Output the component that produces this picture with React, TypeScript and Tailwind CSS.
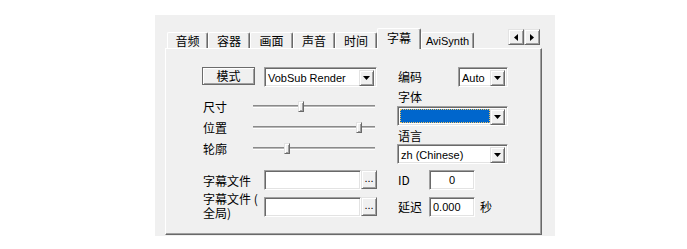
import React from "react";

const cjk = "font-['Noto_Sans_CJK_SC',sans-serif]";
const latin = "font-['Liberation_Sans','Noto_Sans_CJK_SC',sans-serif]";

const sunken =
  "border border-t-[#a0a0a0] border-l-[#a0a0a0] border-r-white border-b-white shadow-[inset_1px_1px_0_#696969,inset_-1px_-1px_0_#e3e3e3]";
const raised =
  "border border-t-[#e3e3e3] border-l-[#e3e3e3] border-r-[#696969] border-b-[#696969] shadow-[inset_1px_1px_0_#fff,inset_-1px_-1px_0_#a0a0a0] bg-[#f0f0f0]";

function DownArrow() {
  return (
    <svg width="7" height="4" viewBox="0 0 7 4">
      <path d="M0 0h7L3.5 4z" fill="#000" />
    </svg>
  );
}

function Combo({ w, text, focus }: { w: string; text?: string; focus?: boolean }) {
  return (
    <div className={`flex h-[20px] ${w} ${sunken} bg-white p-[2px]`}>
      {focus ? (
        <div className="flex-1 bg-[#0066cc] outline-1 outline-dotted outline-[#f0c060] -outline-offset-1" />
      ) : (
        <div className={`flex-1 ${latin} text-[11px] leading-[16px] pl-[1px] text-black`}>{text}</div>
      )}
      <div className={`w-[15px] h-[16px] ${raised} flex items-center justify-center`}>
        <DownArrow />
      </div>
    </div>
  );
}

function TextBox({ w, text, center }: { w: string; text?: string; center?: boolean }) {
  return (
    <div
      className={`h-[20px] ${w} ${sunken} bg-white ${latin} text-[11px] leading-[18px] px-[3px] text-black ${
        center ? "text-center" : ""
      }`}
    >
      {text}
    </div>
  );
}

function Slider({ label, pos }: { label: string; pos: string }) {
  return (
    <div className="flex items-center h-[21px]">
      <div className={`w-[51px] ${cjk} text-[12px] leading-[14px] pl-[1px]`}>{label}</div>
      <div className="relative w-[122px] h-[3px] border-t border-t-[#8a8a8a] border-b border-b-white bg-[#b8b8b8]">
        <div className={`absolute ${pos} top-[-5px] w-[6px] h-[11px] ${raised}`} />
      </div>
    </div>
  );
}

const tabs = [
  { t: "音频", w: "w-[41px]" },
  { t: "容器", w: "w-[42px]" },
  { t: "画面", w: "w-[43px]" },
  { t: "声音", w: "w-[42px]" },
  { t: "时间", w: "w-[42px]" },
];

export default function App() {
  return (
    <div className="w-[687px] h-[249px] bg-white overflow-hidden text-black">
      <div className="ml-[155px] mt-[15px] w-[400px] h-[221px] bg-[#f0f0f0] pl-[10px] pt-[13px]">
        <div className="w-[377px]">
          {/* tab row */}
          <div className="flex items-end h-[20px] pl-[2px] relative">
            {tabs.map((tab) => (
              <div
                key={tab.t}
                className={`${tab.w} h-[16px] border-t border-l border-t-white border-l-white border-r border-r-[#696969] rounded-t-[2px] shadow-[inset_-1px_0_0_#a0a0a0] ${cjk} text-[12px] leading-[14px] text-center pt-[1px]`}
              >
                {tab.t}
              </div>
            ))}
            <div
              className={`relative z-10 w-[44px] h-[21px] -mb-[1px] bg-[#f0f0f0] border-t border-l border-t-white border-l-white border-r border-r-[#696969] rounded-t-[2px] shadow-[inset_-1px_0_0_#a0a0a0] ${cjk} text-[12px] leading-[14px] text-center pt-[2px]`}
            >
              字幕
            </div>
            <div
              className={`w-[53px] h-[16px] border-t border-l border-t-white border-l-white border-r border-r-[#696969] rounded-t-[2px] shadow-[inset_-1px_0_0_#a0a0a0] ${latin} text-[11px] leading-[14px] text-center pt-[1px]`}
            >
              AviSynth
            </div>
            <div className="ml-auto mr-[2px] self-start mt-[1px] flex">
              <div className={`w-[16px] h-[16px] ${raised} flex items-center justify-center`}>
                <svg width="4" height="7" viewBox="0 0 4 7">
                  <path d="M4 0v7L0 3.5z" fill="#000" />
                </svg>
              </div>
              <div className={`w-[16px] h-[16px] ${raised} flex items-center justify-center`}>
                <svg width="4" height="7" viewBox="0 0 4 7">
                  <path d="M0 0v7L4 3.5z" fill="#000" />
                </svg>
              </div>
            </div>
          </div>

          {/* page */}
          <div className="h-[187px] border-t border-l border-t-white border-l-white border-r border-b border-r-[#696969] border-b-[#696969] shadow-[inset_-1px_-1px_0_#a0a0a0] pl-[36px] pt-[18px] flex gap-[20px]">
            {/* left column */}
            <div className="w-[175px] flex flex-col">
              <div className="flex items-start h-[20px] gap-[9px]">
                <div
                  className={`w-[53px] h-[18px] border border-[#6b6b6b] bg-[#f0f0f0] shadow-[inset_1px_1px_0_#fff,inset_-1px_-1px_0_#a0a0a0] ${cjk} text-[12px] leading-[15px] text-center`}
                >
                  模式
                </div>
                <Combo w="w-[113px]" text="VobSub Render" />
              </div>
              <div className="mt-[9px] flex flex-col">
                <Slider label="尺寸" pos="left-[45px]" />
                <Slider label="位置" pos="left-[103px]" />
                <Slider label="轮廓" pos="left-[31px]" />
              </div>
              <div className="mt-[11px] flex items-start h-[20px]">
                <div className={`w-[62px] ${cjk} text-[12px] leading-[14px] pl-[1px] pt-[4px]`}>字幕文件</div>
                <TextBox w="w-[97px]" />
                <div className={`w-[16px] h-[19px] ${raised} ${latin} text-[11px] leading-[14px] text-center`}>...</div>
              </div>
              <div className="mt-[7px] flex items-start h-[20px]">
                <div className={`w-[62px] ${cjk} text-[12px] leading-[14px] pl-[1px] -mt-[5px]`}>
                  字幕文件 (<br />全局)
                </div>
                <TextBox w="w-[97px]" />
                <div className={`w-[16px] h-[19px] ${raised} ${latin} text-[11px] leading-[14px] text-center`}>...</div>
              </div>
            </div>

            {/* right column */}
            <div className="w-[111px] flex flex-col">
              <div className="flex items-center justify-between h-[20px]">
                <div className={`${cjk} text-[12px] leading-[14px] pl-[1px]`}>编码</div>
                <Combo w="w-[50px]" text="Auto" />
              </div>
              <div className={`mt-[3px] ${cjk} text-[12px] leading-[14px] pl-[1px]`}>字体</div>
              <div className="mt-[2px]">
                <Combo w="w-[111px]" focus />
              </div>
              <div className={`mt-[3px] ${cjk} text-[12px] leading-[14px] pl-[1px]`}>语言</div>
              <div className="mt-[1px]">
                <Combo w="w-[111px]" text="zh (Chinese)" />
              </div>
              <div className="mt-[6px] flex items-center h-[20px]">
                <div className={`w-[32px] ${cjk} text-[12px] leading-[14px] pl-[1px]`}>ID</div>
                <TextBox w="w-[46px]" text="0" center />
              </div>
              <div className="mt-[7px] flex items-center h-[20px]">
                <div className={`w-[32px] ${cjk} text-[12px] leading-[14px] pl-[1px]`}>延迟</div>
                <TextBox w="w-[46px]" text="0.000" />
                <div className={`ml-[5px] ${cjk} text-[12px] leading-[14px]`}>秒</div>
              </div>
            </div>
          </div>
        </div>
      </div>
    </div>
  );
}
